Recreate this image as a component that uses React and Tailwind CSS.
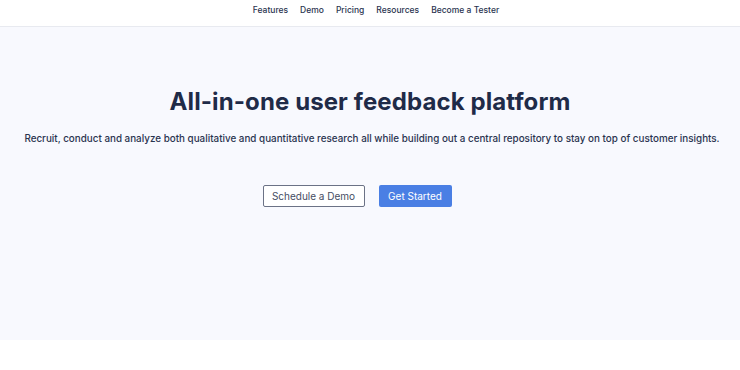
export default function App() {
  const links = ['Features', 'Demo', 'Pricing', 'Resources', 'Become a Tester'];
  return (
    <div className="w-[740px] h-[370px] bg-white" style={{ fontFamily: 'Inter, "Noto Sans", sans-serif' }}>
      <nav className="h-[27px] border-b border-[#e8eaf0] flex justify-center items-start pt-[4px] gap-[12px] pl-[12px]">
        {links.map((l) => (
          <a key={l} className="text-[8.5px] font-medium text-[#2a3450]">{l}</a>
        ))}
      </nav>
      <section className="h-[313px] bg-[#f8f9fe] flex flex-col items-center">
        <h1 className="mt-[60px] text-[24px] leading-[30px] font-bold text-[#1f2b48] tracking-[0.1px]">
          All-in-one user feedback platform
        </h1>
        <p className="mt-[14px] ml-[4px] text-[9.85px] leading-[14px] font-medium text-[#2a3450] whitespace-nowrap">
          Recruit, conduct and analyze both qualitative and quantitative research all while building out a central repository to stay on top of customer insights.
        </p>
        <div className="mt-[40px] flex gap-[14px] pr-[26px]">
          <button className="h-[22px] w-[102px] border border-[#6b7286] rounded-[2px] bg-white text-[10px] text-[#454d63]">
            Schedule a Demo
          </button>
          <button className="h-[22px] w-[73px] rounded-[2px] bg-[#4a7fe4] text-[10px] text-white">
            Get Started
          </button>
        </div>
      </section>
    </div>
  );
}
